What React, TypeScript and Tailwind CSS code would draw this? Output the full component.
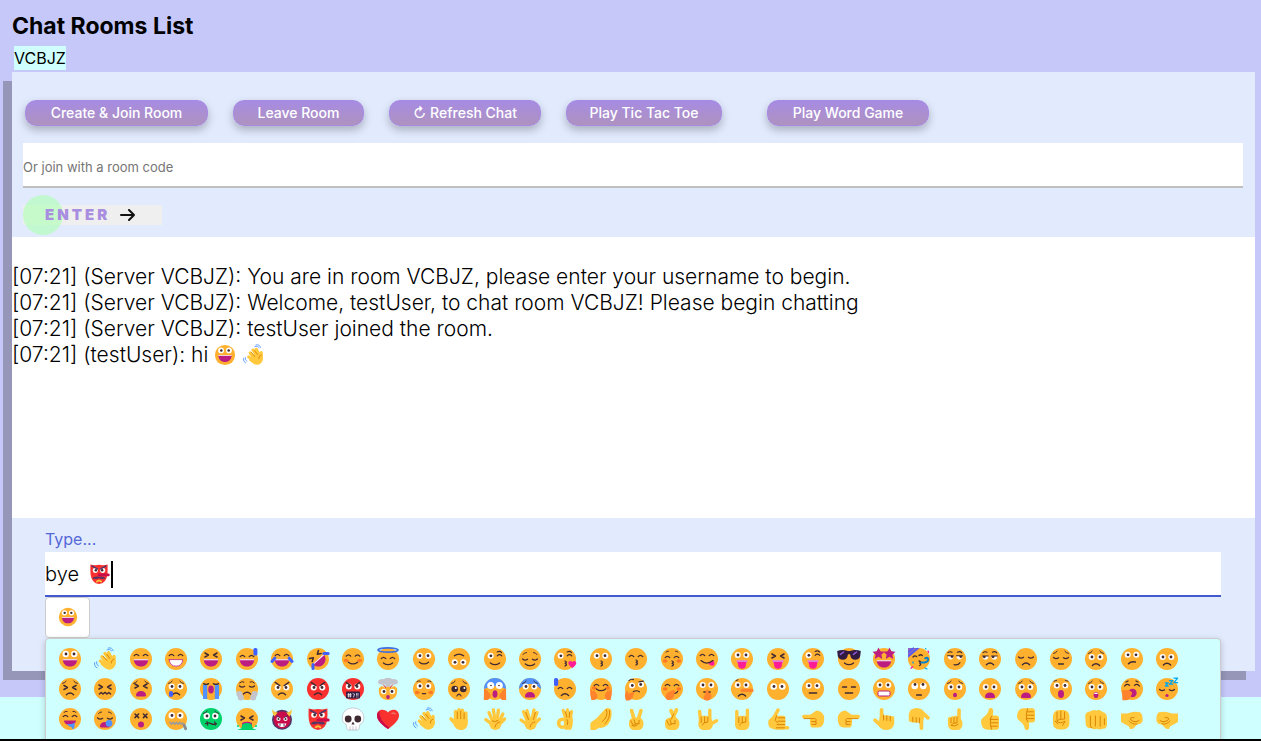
import React, { useState, type ReactNode } from "react";

const INK = "#402a32";
const FACE = "#ffb02e";
const MOUTH = "#bb1d80";
const PINK = "#ff1d96";
const BLUE = "#3f5fff";
const SKY = "#5092ff";
const ORANGE = "#ff822d";
const SKIN = "#ffc83d";
const CREASE = "#d67d00";

/* ---------- drawing primitives, all on a 24 x 24 canvas ---------- */

function Stroke({ d, c = INK, w = 1.3 }: { d: string; c?: string; w?: number }) {
  return <path d={d} fill="none" stroke={c} strokeWidth={w} strokeLinecap="round" strokeLinejoin="round" />;
}

function Disc({ c = FACE }: { c?: string }) {
  return <circle cx="12" cy="12" r="11" fill={c} />;
}

function Eye({ x, y, r = 3, px = 0, py = 0, p = 1.4 }: { x: number; y: number; r?: number; px?: number; py?: number; p?: number }) {
  return (
    <>
      <circle cx={x} cy={y} r={r} fill="#fff" />
      <circle cx={x + px} cy={y + py} r={p} fill={INK} />
    </>
  );
}

function Open({ y = 8.7, r = 3, px = 0.3, py = 0, p = 1.4 }: { y?: number; r?: number; px?: number; py?: number; p?: number }) {
  return (
    <>
      <Eye x={7.7} y={y} r={r} px={px} py={py} p={p} />
      <Eye x={16.3} y={y} r={r} px={-px} py={py} p={p} />
    </>
  );
}

const Arcs = ({ y = 8 }: { y?: number }) => (
  <g transform={`translate(0 ${y})`}>
    <Stroke d="M5.2 .6q2.2-2.6 4.6 0M14.2 .6q2.2-2.6 4.6 0" />
  </g>
);
const Closed = ({ y = 11 }: { y?: number }) => (
  <g transform={`translate(0 ${y})`}>
    <Stroke d="M4.6 0q2.4 2.2 5 .3M19.4 0q-2.4 2.2-5 .3" />
  </g>
);
const Squint = ({ y = 8 }: { y?: number }) => (
  <g transform={`translate(0 ${y})`}>
    <Stroke d="M6-2l3.4 2L6 2M18-2l-3.4 2L18 2" w={1.5} />
  </g>
);
const Wink = ({ y = 8 }: { y?: number }) => (
  <>
    <Eye x={7.6} y={y + 0.8} px={0.3} />
    <g transform={`translate(0 ${y})`}>
      <Stroke d="M14.2 .8q2.2-2.4 4.6 0M14.2-3q2.6-1.6 4.4 .6" w={1.1} />
    </g>
  </>
);
const SadBrows = () => <Stroke d="M4.6 6.4q2.4-.4 3.6-2.2M19.4 6.4q-2.4-.4-3.6-2.2" w={1} />;
const AngryBrows = () => <Stroke d="M5.2 5.4l4.6 3.2M18.8 5.4l-4.6 3.2" w={1.4} />;
const Blush = ({ y = 13.5 }: { y?: number }) => (
  <g fill="#ff6723" opacity=".75">
    <ellipse cx="5.2" cy={y} rx="2.4" ry="1.8" />
    <ellipse cx="18.8" cy={y} rx="2.4" ry="1.8" />
  </g>
);
const Laugh = () => (
  <>
    <path d="M4.8 12.2h14.4c0 4.4-3 7.4-7.2 7.4s-7.2-3-7.2-7.4z" fill={MOUTH} />
    <path d="M4.8 12.2h14.4l-.2 1H5z" fill="#fff" />
  </>
);
const Smile = ({ y = 15.2 }: { y?: number }) => (
  <g transform={`translate(0 ${y})`}>
    <Stroke d="M7.4 0q4.6 3.4 9.2 0" />
  </g>
);
const Frown = ({ y = 17.8 }: { y?: number }) => (
  <g transform={`translate(0 ${y})`}>
    <Stroke d="M8.4 0q3.6-3.4 7.2 0" w={1.4} />
  </g>
);
const Kiss = ({ y = 13 }: { y?: number }) => (
  <g transform={`translate(0 ${y})`}>
    <Stroke d="M12 0q2.6.9.2 2.4q2.6 1.2-.2 2.6" />
  </g>
);
const Tongue = () => (
  <>
    <path d="M6.2 13.200h11.600l-1 2.600H7.200z" fill="#e07be0" />
    <path d="M7.600 15h8.800l-.8 4.400q-.6 2.400-3.600 2.400t-3.600-2.400z" fill={PINK} />
  </>
);
const Flat = ({ y = 16 }: { y?: number }) => (
  <g transform={`translate(0 ${y})`}>
    <Stroke d="M8.400 0h7.200" w={1.500} />
  </g>
);
const Gape = ({ y = 17, rx = 2.4, ry = 2.6 }: { y?: number; rx?: number; ry?: number }) => (
  <ellipse cx="12" cy={y} rx={rx} ry={ry} fill={MOUTH} />
);
const Moan = ({ y = 14.500 }: { y?: number }) => (
  <g transform={`translate(0 ${y})`}>
    <path d="M7 4.600C7 1.600 9 0 12 0s5 1.600 5 4.600q0 .8-1 .8H8q-1 0-1-.8z" fill={MOUTH} />
  </g>
);
const HandBlob = ({ d }: { d: string }) => <path d={d} fill={ORANGE} />;

/* ---------- hands ---------- */

const Finger = ({ d, w = 3.4 }: { d: string; w?: number }) => <Stroke d={d} c={SKIN} w={w} />;
const Crease = ({ d }: { d: string }) => <Stroke d={d} c={CREASE} w={0.9} />;

const Wave = () => (
  <>
    <Finger d="M9 9.800l6 7M12 6.600l6 8M15.600 5.800l4 8M7.400 14l6.400 5.400M21 9.400v7" w={3.400} />
    <path d="M9.600 14l8-5.400 5 4.400q1 6-3.200 8.800-3.400 2-6.800-.2l-5-4z" fill={SKIN} />
    <Crease d="M10.400 9.400l3.400 4M13.800 7.400l3 4M21 12q-3 1-2.800 4" />
    <Stroke d="M14 2.800q3-1.600 4.600 1M15.200 1q4.200-1 5 2.800M3.600 14.800q-.8 3 1.800 4.200M1.600 15.600q-.6 4 2.400 5.200" c={SKY} w={0.9} />
  </>
);
const PalmUp = () => (
  <>
    <Finger d="M8.600 4.600v10M12 2.900v12M15.400 3.400V15M18.800 6V16M4 12l5 5" w={3.600} />
    <path d="M7 11h13.600v5.500c0 4-2.600 6.500-6.400 6.500-3.400 0-5.400-1.400-7.400-4.500z" fill={SKIN} />
    <Crease d="M10.300 5v6.600M13.700 4.200v7.400M17.100 6v5.800" />
  </>
);
const Spread = () => (
  <>
    <Finger d="M6 5.600l3.800 9M10.400 3l1.800 11M15.400 3.200L14 14M19.800 7l-4.200 9M2.800 12.600l7 5M21.600 12l-6 6" w={3.300} />
    <circle cx="12.400" cy="17" r="6" fill={SKIN} />
    <Crease d="M9.400 14q3 1.800 5.600-.6M16.800 15q-4 .4-4.800 5" />
  </>
);
const Vulcan = () => (
  <>
    <Finger d="M5.600 4.800l4 10M9 3.600l2.800 10M16 3l-2.400 11M19 5.600l-3.600 10M3 13l7 5M21.400 12l-6 6" w={3.300} />
    <circle cx="12.600" cy="17" r="6" fill={SKIN} />
    <Crease d="M7.800 5.400l2.600 7.200M17.400 5.400l-2 7M16.800 15q-4 .4-4.800 5" />
  </>
);
const Okay = () => (
  <>
    <Finger d="M10.200 3.400l3.200 10M14.400 2.800l.8 11M18.600 4.600l-2 9" w={3.200} />
    <path d="M12 9.600h7.400q1.400 7.400-1.400 13.200h-6q-2-2-.4-13z" fill={SKIN} />
    <circle cx="9.600" cy="16.200" r="4" fill="none" stroke={SKIN} strokeWidth="3.600" />
    <Crease d="M12.300 4.600l1.600 5.600M16.600 4.800l-.4 5.600M14 12.600q1.600 2 .4 5" />
  </>
);
const Pinch = () => (
  <>
    <path d="M1.400 23v-7q3-3 6-4.600L15.600 2.400q4-3 6.600.4 1.600 8.600-3.400 15-3.600 3.600-8.600 3L6.400 23z" fill={SKIN} />
    <Crease d="M17.400 2.600q2.600 6.800-4.200 12M20.400 3.400q1.400 7.400-4.400 13.400" />
  </>
);
const Fist = ({ children }: { children?: ReactNode }) => (
  <>
    <rect x="5" y="10.400" width="14.400" height="12.600" rx="5.200" fill={SKIN} />
    {children}
  </>
);
const Victory = () => (
  <>
    <Finger d="M7.600 3.600l2.800 10M17 3.600l-3 10" w={3.600} />
    <Fist>
      <Crease d="M6.800 13.600l2 4M10 12.600l1.400 4.600M15 13.400v3.600q-4-1.400-5.400 1.400M8 18.600q3 1.800 5.400-.6" />
    </Fist>
  </>
);
const Crossed = () => (
  <>
    <Finger d="M11 3.800l4.600 10M16.400 3l-4.600 10" w={3.800} />
    <Fist>
      <Crease d="M13.600 7l-2.200 5M6.800 13.600l2 4M10 12.600l1.400 4.600M15 13.400v3.600q-4-1.400-5.400 1.400" />
    </Fist>
  </>
);
const Horns = () => (
  <>
    <Finger d="M6.800 4.400v10M17.400 3.200v11" w={3.400} />
    <Fist>
      <Finger d="M10.600 10v4M14 10v4" w={3.200} />
      <Crease d="M8.800 10v5.600M12.300 9.600v6M15.800 10v5q-4.800 0-6.400 3" />
    </Fist>
  </>
);
const LoveYou = () => (
  <>
    <Finger d="M4.600 4.400l1 10M14.800 3.200v11M14 18l7.600-4.200" w={3.400} />
    <g transform="translate(-1.600 0)">
      <Fist>
        <Finger d="M9.600 10v4M12.800 10v4" w={3.200} />
        <Crease d="M7.800 10v5.600M11.200 9.600v6M14.400 10v5q-4.400 0-5.600 3" />
      </Fist>
    </g>
  </>
);
const CallMe = () => (
  <>
    <Finger d="M12 3.200L6.600 13M11 20.800h10.600" w={3.600} />
    <path d="M2.400 13.600q4-5.600 9-4.800h6q2 0 2 2v9.600q0 2-2 2H9Q.8 22 2.400 13.600z" fill={SKIN} />
    <Crease d="M10.600 8.600l-1.400 4.800 2.600 2.600M12 10.800h6.600M12 14.200h7M11 17.600h7.600M10.400 20.800h8" />
  </>
);
const PointLeft = () => (
  <>
    <Finger d="M2.800 9.600H14" w={3.600} />
    <path d="M9 8l6.400-4.400q7.800.8 7.800 8.400t-5.400 8.600h-6.800q-2.400-1.400-2-6.600z" fill={SKIN} />
    <Crease d="M3 11.600h10.400M10.600 14.600h4.200M11 17.400h3.800M14.400 11.600q1.800 1.200.2 3 1.600 1.400 0 3" />
  </>
);
const PointUp = () => (
  <>
    <Finger d="M9.600 2.900V14M3 13.200l6 5.400" w={3.700} />
    <path d="M8 9q8-1.800 14.200.8v7q-1.200 6.200-7.800 6.200T6.400 17z" fill={SKIN} />
    <Crease d="M11.600 8v5M14.800 8.800v4.600M18.200 9.400v4.400" />
  </>
);
const IndexUp = () => (
  <>
    <Finger d="M16 3v12" w={3.600} />
    <Fist>
      <Finger d="M6.400 11.400v5M9.400 10.400v6M12.400 10v6" w={3} />
      <Crease d="M8 11v4.800M11 10.400v5.400M14 9.800v6q-4.600-.4-6 2.600 4 1.600 7-1" />
    </Fist>
  </>
);
const ThumbUp = () => (
  <>
    <path d="M3 14.600q0-3 3-4.800 4.200-3 4.600-7 .6-2.400 2.800-1.800 2.800.8 1.400 7.400h4q2.200.4 2.200 2.600v9q0 2.600-2.600 2.800h-9Q3.400 22.600 3 14.600z" fill={SKIN} />
    <Crease d="M13.800 9.200l-1.600 3M13.400 12.400h6.400M13.200 15.800h6.600M13.200 19.200h6M12.600 11.600q-1 5 .8 10.600" />
  </>
);
const RaisedFist = () => (
  <>
    <rect x="4" y="3" width="16.400" height="19.400" rx="6" fill={SKIN} />
    <Crease d="M8 5v7.600M11.800 4.200v7.600M15.600 5v7q-5.600-.4-8 2 3 3.200 8 .6M16 14.400l-2.400 4M6 14l3 3" />
  </>
);
const Punch = () => (
  <>
    <path d="M1.200 9Q1.600 5 6 4.600 9 2 12.400 3.400q4-1 6 1.600 4 .6 4.600 5v8q-.6 4-4 3.600-3 1.600-6 .2-3 1.400-6-.8-4 .8-5.200-3z" fill={SKIN} />
    <Crease d="M6.400 9v9.600q0 2 1.400 2.200M11.400 9v10M16.200 9.200v10M20.400 11.600v6" />
  </>
);
const SideFist = () => (
  <>
    <path d="M23 6.600h-6Q10 3.600 4 5.200 1 7.200 1.400 14q1.400 3.600 5.600 3.600l3.600 4q3.800 1.600 4.400-2.200l8-4.400z" fill={SKIN} />
    <Crease d="M5 13.600q4 2.600 8-.6 2.400-2.800-3-2.400M7 17q5 .8 8-3" />
  </>
);

/* ---------- emoji catalogue ---------- */

const heart = "M12 22C3 15.600 1 11.800 1 8.200 1 2.400 8.600.6 12 5.600 15.400.6 23 2.400 23 8.200c0 3.600-2 7.400-11 13.800z";
const star = "M0-5l1.500 3.200 3.500.4-2.600 2.400.7 3.500L0 2.800l-3.100 1.700.7-3.500L-5-1.400l3.500-.4z";

const EMOJI: Record<string, ReactNode> = {
  "grinning face": (<><Disc /><Open y={7} r={3.200} /><Laugh /></>),
  "waving hand": <Wave />,
  "smiling eyes": (<><Disc /><Arcs /><Laugh /></>),
  "beaming face": (<><Disc /><Arcs /><path d="M5 12.400h14q-.4 7-7 7t-7-7z" fill="#fff" /><Stroke d="M5.200 12.600h13.600q-.6 6.600-6.800 6.600t-6.800-6.600z" c={MOUTH} w={0.8} /></>),
  "squinting face": (<><Disc /><Squint /><Laugh /></>),
  "sweat smile": (<><Disc /><Arcs y={9} /><Laugh /><rect x="18.400" y="1" width="4" height="7.600" rx="1.600" fill={BLUE} /></>),
  "tears of joy": (<><Disc /><Arcs /><Laugh /><Stroke d="M4.800 11.200l-2.800 3.200M19.200 11.200l2.800 3.200" c={BLUE} w={3} /></>),
  "rolling laugh": (<><g transform="rotate(-42 12 12)"><Disc /><Squint /><Laugh /></g><Stroke d="M17.800 6.600h4.400M7 17.400v4.200" c={BLUE} w={3} /></>),
  "blushing smile": (<><Disc /><Blush /><Arcs y={8.500} /><Smile /></>),
  halo: (<><Disc /><ellipse cx="12" cy="3" rx="10" ry="2.100" fill="none" stroke="#3f6fe0" strokeWidth="1.700" /><Arcs y={11} /><Smile y={16} /></>),
  "slight smile": (<><Disc /><Open /><Smile /></>),
  "upside down": (<g transform="rotate(180 12 12)"><Disc /><Open /><Smile /></g>),
  "winking face": (<><Disc /><Wink /><Smile y={16} /></>),
  "relieved face": (<><Disc /><Closed y={12} /><Stroke d="M5 7.500q1-2 3.600-2M19 7.500q-1-2-3.600-2" w={0.9} /><Smile y={17} /></>),
  "blowing a kiss": (<><Disc /><Wink /><Kiss y={14} /><path d={heart} transform="translate(15 13) scale(.36)" fill={PINK} /></>),
  "kissing face": (<><Disc /><Open /><Kiss y={14} /></>),
  "kissing smile": (<><Disc /><Arcs y={9} /><Kiss /></>),
  "kissing blush": (<><Disc /><Blush y={14} /><Arcs y={10} /><Stroke d="M6 5q1.200-1 2.400-.8M18 5q-1.200-1-2.400-.8" w={1} /><Kiss y={14} /></>),
  savoring: (<><Disc /><Arcs /><path d="M13 15.800l5.400-2.200q2.400 4.600-.8 5.200-2.800.4-4.600-3z" fill={PINK} /><Stroke d="M6 13.600q5.400 5 12 0" /></>),
  tongue: (<><Disc /><Open y={8} /><Tongue /></>),
  "squinting tongue": (<><Disc /><Squint y={9} /><Tongue /></>),
  "winking tongue": (<><Disc /><Wink y={7.500} /><Tongue /></>),
  sunglasses: (<><Disc /><path d="M.2 4Q5.400 1.800 11 4h2q5.600-2.200 10.800 0l-.6 5q-1 3.800-5 3.800-4.400 0-5.200-5.600h-2q-.8 5.600-5.200 5.600-4 0-5-3.800z" fill="#321b41" /><Stroke d="M3.400 7.400l3.200-2.400M16.400 7.400l3.200-2.400" c="#8c5ad8" w={1.500} /><Smile y={16} /></>),
  "star struck": (<><Disc /><path d={star} transform="translate(6.500 6.500) scale(1.200)" fill={MOUTH} /><path d={star} transform="translate(17.500 6.500) scale(1.200)" fill={MOUTH} /><g transform="translate(0 1)"><Laugh /></g></>),
  partying: (<><Disc /><path d="M1 1h12L1 11z" fill="#8d65c5" /><Stroke d="M1.800 5l4.600-4M1.800 8.800l8.600-7.400" c={BLUE} w={1.200} /><Stroke d="M6 10q1.800-2 3.600-.4M12 8.600q1.800-1.600 3.400 0" /><Stroke d="M12 14q2.600.6.6 2 2 1 0 2.600" /><Stroke d="M14.400 15.600q7 0 6.800-3.200-.6-2.800-3-1" c="#0084ce" w={2} /><Stroke d="M4 21.400l1.600-1.600M21 4l.6 1.600" c={PINK} /><Stroke d="M18 21l2 1M18.600 1.600l.2.200M6 15v1" c="#00a6ed" /></>),
  smirking: (<><Disc /><Eye x={7.700} y={9.600} r={2.800} px={1.300} /><Eye x={16.500} y={9.600} r={2.800} px={1.300} /><path d="M4 5h16.600v4H4z" fill={FACE} /><Stroke d="M4.600 8.800h5.600M13.600 8.800h5.800M5 5.600q2-1.600 4-.4M14.400 5.200q2.600-1.400 4.400.6M11 17.600q4 1.200 6-2" w={1.100} /></>),
  unamused: (<><Disc /><Eye x={7.500} y={9.800} r={2.800} px={-1.200} /><Eye x={16.300} y={9.800} r={2.800} px={-1.200} /><path d="M4 5h16v4H4z" fill={FACE} /><Stroke d="M4.600 9h5.600M13.600 9h5.600M5 5.600q2-1.600 4-.4M14.400 5.200q2.600-1.400 4.400.6" w={1.100} /><Frown /></>),
  disappointed: (<><Disc /><Closed y={10} /><Frown /></>),
  pensive: (<><Disc /><Closed y={10.500} /><SadBrows /><g transform="translate(3.600 0) scale(.7 1)"><Flat y={17} /></g></>),
  worried: (<><Disc /><Open y={10} /><SadBrows /><Frown y={18.500} /></>),
  confused: (<><Disc /><Open y={7.800} /><Stroke d="M8.400 16.800q2.600-2.800 7-1.800" /></>),
  "slight frown": (<><Disc /><Open y={10} /><Frown y={18} /></>),

  persevering: (<><Disc /><SadBrows /><Squint y={10.500} /><Frown /></>),
  confounded: (<><Disc /><Squint y={10} /><Stroke d="M6.400 17l1.800-1.600L10 17l2-1.600 2 1.600 1.800-1.600L17.600 17" w={1.400} /></>),
  tired: (<><Disc /><SadBrows /><Squint y={9} /><Moan y={14} /></>),
  crying: (<><Disc /><Open y={9.500} /><SadBrows /><Frown /><rect x="5" y="14" width="4" height="6" rx="2" fill={BLUE} /></>),
  sobbing: (<><Disc /><Stroke d="M4.600 6.600q2.600 1.600 5 0M19.400 6.600q-2.600 1.600-5 0" /><path d="M4 8h4.200v14H4zM15.800 8H20v14h-4.200z" fill={SKY} /><Gape y={12.500} rx={2.800} ry={4} /></>),
  "steam from nose": (<><Disc /><Stroke d="M4.600 6q2-2.400 4.400-1M19.400 6q-2-2.400-4.400-1" w={1} /><Closed y={9} /><Frown y={17} /><g fill="#c4c4cc"><circle cx="4.400" cy="17" r="3" /><circle cx="5.800" cy="20.400" r="3" /><circle cx="19.600" cy="17" r="3" /><circle cx="18.200" cy="20.400" r="3" /></g></>),
  angry: (<><Disc /><Open y={10.500} /><AngryBrows /><Frown /></>),
  enraged: (<><Disc c="#f8312f" /><Open y={10.500} /><AngryBrows /><Frown /></>),
  cursing: (<><Disc c="#f8312f" /><Open y={9.500} /><AngryBrows /><rect x="5" y="14.600" width="14" height="7" rx="1" fill="#321b41" /><Stroke d="M7.600 16.400v3.600M9.400 16.400v3.600M6.800 17.400h3.400M6.800 19h3.400M12 16.600l1.600.6-1 2.800M15.600 16.400v2M17 16.400v2M15.600 20h.1M17 20h.1" c="#fff" w={0.7} /></>),
  "exploding head": (<><path d="M3 11l3-2 2.600 1.600L12 8.400l3.400 2.200L18 9l3 2q1.400 11.400-9 12Q1.600 22.400 3 11z" fill={FACE} /><path d="M2 5Q2 1.600 8 2q4-2.400 8 0 6-.4 6 3 0 2.600-5 2.600h-2.600l1 3.400-3.400-1.600L8.600 11l1-3.400H7Q2 7.600 2 5z" fill="#c4c4cc" /><Stroke d="M7.600 8l2 2.600M16.400 8l-2 2.600" c="#f8312f" w={1} /><Open y={14.500} r={2.700} /><Gape y={20} rx={1.800} ry={2} /></>),
  flushed: (<><Disc /><Blush y={15.500} /><Open y={9} /><Stroke d="M5 4.600q1.600-1.200 3.200-.6M19 4.600q-1.600-1.200-3.200-.6" w={0.9} /><Stroke d="M10.400 16.600h3.200" /></>),
  pleading: (<><Disc /><SadBrows /><circle cx="7.700" cy="12" r="3.300" fill={INK} /><circle cx="16.300" cy="12" r="3.300" fill={INK} /><g fill="#fff"><circle cx="8.800" cy="11" r="1" /><circle cx="17.400" cy="11" r="1" /></g><g transform="translate(4.800 0) scale(.6 1)"><Frown y={19} /></g></>),
  screaming: (<><Disc /><path d="M1 12a11 11 0 0 1 22 0q-6-3-11-3t-11 3z" fill={SKY} /><Open y={8.500} r={3.500} p={0.8} /><Gape y={17} rx={2.500} ry={3.800} /><HandBlob d="M1 12q3 0 4.600 3.600 3 1.600 1.800 5L5 23H.8zM23 12q-3 0-4.600 3.600-3 1.600-1.800 5L19 23h4.200z" /></>),
  "anxious with sweat": (<><Disc /><path d="M1 12a11 11 0 0 1 22 0q-6-5-11-5t-11 5z" fill={SKY} /><Open y={9.500} /><SadBrows /><Moan y={15} /></>),
  "downcast with sweat": (<><Disc /><Arcs y={11} /><Frown y={18.500} /><rect x="1" y="1" width="4.200" height="8" rx="1.800" fill={BLUE} /></>),
  hugging: (<><Disc /><Blush y={11} /><Arcs y={8} /><Smile y={12} /><HandBlob d="M1.400 11.600l2.800 3 .8-1.400 3 4q1 3.800-2 5.800H2.400Q.4 17 1.400 11.600zM22.600 11.600l-2.800 3-.8-1.400-3 4q-1 3.800 2 5.800h3.600q2-5.400 1-11.400z" /></>),
  thinking: (<><Disc /><Eye x={8} y={8.500} px={0.3} /><Eye x={17} y={7.500} px={-0.3} /><Stroke d="M5 3.600q2-2 4.400-1M15 4.800l4.400-.6M9.400 14.600q3-1.800 6 .2" w={1.200} /><HandBlob d="M2 14q2-.6 2.400 2.600l5-1.600q2.400.2.400 2-1 6-4.800 6.400H2Q-.2 18.600 2 14z" /></>),
  "hand over mouth": (<><Disc /><Blush y={12} /><Arcs y={8} /><Stroke d="M14.600 16.400q2.400-.4 3-2" /><HandBlob d="M13.400 13q2.600.4 1 3.800-.2 5-4.400 6.200-4 .8-4.600-3.600Q6 15 13.400 13z" /></>),
  shushing: (<><Disc /><Open y={8} /><Stroke d="M8.800 15h6.400" /><HandBlob d="M11.600 12.600q2.200-.4 2 3 3.800 1.400 2.400 5.400-1 3-4.600 2.600-3.600-.8-2.600-4.400.8-1.200 1.600-2.400-.2-3.400 1.200-4.200z" /></>),
  lying: (<><Disc /><Open y={8} /><Stroke d="M6 3.600l2-.8" w={1} /><Stroke d="M12.400 13.400h9.600" c={ORANGE} w={3.200} /><Frown y={19} /></>),
  "no mouth": (<><Disc /><Open y={9.500} r={3.300} /></>),
  neutral: (<><Disc /><Open /><Flat y={16} /></>),
  expressionless: (<><Disc /><Stroke d="M5.600 10h4M14.400 10h4" w={1.400} /><Flat y={16} /></>),
  grimacing: (<><Disc /><Open y={8} /><rect x="6" y="14" width="12" height="5" rx="1.600" fill="#fff" stroke={MOUTH} strokeWidth="1" /></>),
  "rolling eyes": (<><Disc /><Open y={9} r={3.300} py={-1.500} /><Stroke d="M9.600 18h4.800" /></>),
  hushed: (<><Disc /><Open y={10} /><SadBrows /><Gape y={18} rx={2} ry={2.200} /></>),
  "frowning open": (<><Disc /><Open y={10} /><Moan y={15.500} /></>),
  anguished: (<><Disc /><Open y={10} /><SadBrows /><Moan y={15.500} /></>),
  "open mouth": (<><Disc /><Open y={8.500} /><Stroke d="M5 4.200l2.600-.8M19 4.200l-2.600-.8" w={0.9} /><Gape y={17} rx={3} ry={4} /></>),
  astonished: (<><Disc /><Open y={10} /><SadBrows /><Gape y={18} rx={2.400} ry={3} /><path d="M10 17q.4-1.600 2-1.600t2 1.600z" fill="#fff" /></>),
  yawning: (<><Disc /><Stroke d="M4.600 9q2.400-3 5-.6M19.400 9q-2.400-3-5-.6M6 5l2-1M18 5l-2-1" w={1.200} /><circle cx="12.500" cy="16" r="4.200" fill={MOUTH} /><HandBlob d="M2 13.600q5-1.400 9 .6 2.400 2 .2 4-1 4.600-4.600 5H2.400z" /></>),
  sleeping: (<><Disc /><Closed y={12.500} /><Gape y={18.500} rx={1.600} ry={1.600} /><Stroke d="M10.400 6h2.800l-2.800 3h2.800M14.600 3.600h3.200l-3.200 3.600h3.200M19 1.200h3.600l-3.600 4.400h3.600" c="#00a6ed" w={1.300} /></>),

  drooling: (<><Disc /><Arcs y={9} /><Stroke d="M6 5.400q1.200-1.400 3-1M18 5.400q-1.200-1.400-3-1" w={1} /><path d="M6 13.600h12q-.4 4.400-6 4.400t-6-4.400z" fill={MOUTH} /><path d="M9 17h5l2.400-1.400q.6 5-1 6.400-1.600.6-1.800-2-2.400.6-4.600-3z" fill={SKY} /></>),
  sleepy: (<><Disc /><Closed y={11} /><Stroke d="M5.400 6.600q1.200-1.600 3.200-1.600M18.600 6.600q-1.200-1.600-3.200-1.600" w={0.9} /><Moan y={15} /><circle cx="16" cy="16.400" r="3.300" fill={SKY} /></>),
  dizzy: (<><Disc /><Stroke d="M6 7l3.600 3.600M9.600 7L6 10.600M14.400 7l3.600 3.600M18 7l-3.600 3.600" w={1.500} /><Gape y={17.500} rx={3} ry={3} /></>),
  "zipper mouth": (<><Disc /><Open y={8.500} r={3.200} /><Stroke d="M6 15.400l1.600 1.800 1.600-1.800 1.600 1.800 1.600-1.800 1.600 1.800 1.600-1.800 1.600 1.800 1.600-1.200" c="#9b9b9b" w={1.600} /><Stroke d="M20 18l1.600 3.600" c="#8c8c8c" w={3} /></>),
  nauseated: (<><Disc c="#00d26a" /><Open y={9} r={3.200} /><SadBrows /><Stroke d="M6.600 16.600q2.600-1.600 5.400 0 2.800 1.600 5.400 0M8 14.600l.6 3.400M15.800 15l.4 3" /></>),
  vomiting: (<><Disc /><Squint y={11} /><path d="M7 16q5-2.400 10 0v4H7z" fill={MOUTH} /><path d="M7.600 17q4.400-2 8.800 0l1.400 4.400 4 1.600H2.200l4-1.600z" fill="#00d26a" /><g fill="#00d26a"><circle cx="3" cy="19" r="1" /><circle cx="21" cy="19" r="1" /></g></>),
  imp: (<><circle cx="12" cy="12.800" r="10" fill="#533566" /><circle cx="12" cy="13" r="8.400" fill="#ca0b4a" /><path d="M2.600 2q1 3.400 5.200 3.600L4.600 9.400Q1.400 6 2.600 2zM21.400 2q-1 3.400-5.200 3.600l3.200 3.800q3.200-3.400 2-7.400z" fill="#f9c23c" /><Eye x={8.500} y={12} r={2.100} p={1} /><Eye x={15.500} y={12} r={2.100} p={1} /><path d="M7.600 16.400h8.800q-1 3.600-4.400 3.600t-4.400-3.600z" fill="#fff" /><Stroke d="M6.400 8.800l3.200 1.600M17.600 8.800l-3.200 1.600M10 17v2M14 17v2" c="#533566" w={1} /></>),
  goblin: (<><path d="M2.600 1.600q4 1.400 9.400.4 5.400 1 9.400-.4.2 7-.2 11-1.200 9.800-9.200 10.400-8-.6-9.200-10.400-.4-4-.2-11z" fill="#f8312f" /><Eye x={8} y={8} r={2.800} px={0.600} /><Eye x={16} y={8} r={2.800} px={-0.600} /><Stroke d="M4.600 3.400l5.600 3M19.400 3.400l-5.600 3" c="#533566" w={1.700} /><path d="M4.400 17q3-3.400 7.600-2 4.600-1.400 7.600 2-4.600 1-7.600-.4-3 1.400-7.600.4z" fill="#533566" /><Stroke d="M12 13h10.200" c="#ca0b4a" w={3} /><Stroke d="M9.600 20.400q2.400-2.400 4.800 0" c="#f9c23c" w={1.800} /></>),
  skull: (<><path d="M12 1C5 1 1.200 5.600 1.200 11c0 3.600 1.600 5.600 4 6.400L6 22q.4 1 1.600 1h8.800q1.200 0 1.600-1l.8-4.600c2.400-.8 4-2.800 4-6.400C22.800 5.600 19 1 12 1z" fill="#fff" stroke="#b4acbc" strokeWidth=".6" /><circle cx="7.200" cy="12" r="3.400" fill={INK} /><circle cx="16.800" cy="12" r="3.400" fill={INK} /><path d="M12 14.600l1.600 3h-3.200z" fill={INK} /><Stroke d="M9 19.600V23M12 19.600V23M15 19.600V23" c="#b4acbc" w={0.700} /></>),
  heart: (<><path d={heart} fill="#f8312f" /><path d="M3.400 3.800Q1 5.600 1 8.400c0 3.600 2 7.400 11 13.600l1.600-1.200Q2.600 13.400 3.400 3.800z" fill="#ca0b4a" /><Stroke d="M16 6.400q1.600-1 3 .4" c="#f37366" w={1.600} /></>),
  "waving hand again": <Wave />,
  "raised back of hand": <PalmUp />,
  "hand with fingers splayed": <Spread />,
  "vulcan salute": <Vulcan />,
  "ok hand": <Okay />,
  "pinched fingers": <Pinch />,
  "victory hand": <Victory />,
  "crossed fingers": <Crossed />,
  "love-you gesture": <LoveYou />,
  "sign of the horns": <Horns />,
  "call me hand": <CallMe />,
  "pointing left": <PointLeft />,
  "pointing right": (<g transform="matrix(-1 0 0 1 24 0)"><PointLeft /></g>),
  "pointing up": <PointUp />,
  "pointing down": (<g transform="matrix(-1 0 0 -1 24 24)"><PointUp /></g>),
  "index pointing up": <IndexUp />,
  "thumbs up": <ThumbUp />,
  "thumbs down": (<g transform="matrix(1 0 0 -1 0 24)"><ThumbUp /></g>),
  "raised fist": <RaisedFist />,
  "oncoming fist": <Punch />,
  "left-facing fist": (<g transform="matrix(-1 0 0 1 24 0)"><SideFist /></g>),
  "right-facing fist": <SideFist />,
};

function Emoji({ name, className }: { name: string; className: string }) {
  return (
    <svg viewBox="0 0 24 24" className={className} role="img" aria-label={name}>
      {EMOJI[name]}
    </svg>
  );
}

/* ---------- page ---------- */

function PillButton({ children, className = "" }: { children: ReactNode; className?: string }) {
  return (
    <button
      type="button"
      className={`h-[26px] whitespace-nowrap rounded-[11px] border border-[#a78be3] bg-linear-to-b from-[#a78be3] to-[#ae92bf] text-sm leading-[22px] font-medium text-white shadow-[0_4px_8px_rgba(0,0,0,0.25)] ${className}`}
    >
      {children}
    </button>
  );
}

const SERVER_LINES = [
  "[07:21] (Server VCBJZ): You are in room VCBJZ, please enter your username to begin.",
  "[07:21] (Server VCBJZ): Welcome, testUser, to chat room VCBJZ! Please begin chatting",
  "[07:21] (Server VCBJZ): testUser joined the room.",
];

export default function App() {
  const [text, setText] = useState("bye");

  return (
    <div className="flex h-screen flex-col overflow-hidden bg-[#cfffff] font-['Inter',sans-serif] text-black">
      <div className="bg-[#c5c8f9] pt-3 pr-1.5 pb-[26px] pl-3">
        <h1 className="text-[23px] leading-7 font-bold">Chat Rooms List</h1>
        <ul className="mt-1.5 mb-0.5 ml-0.5 flex">
          <li className="bg-[#cfffff] text-base leading-6 font-normal">VCBJZ</li>
        </ul>

        <main className="bg-[#e2eafe] shadow-[-9px_9px_0_#9596b8]">
          <section className="pt-7 pr-3 pb-0.5 pl-[11px]">
            <div className="flex gap-[25px] pl-0.5">
              <PillButton className="w-[183px]">Create &amp; Join Room</PillButton>
              <PillButton className="w-[131px]">Leave Room</PillButton>
              <PillButton className="w-[152px]">↻ Refresh Chat</PillButton>
              <PillButton className="w-[156px]">Play Tic Tac Toe</PillButton>
              <PillButton className="ml-5 w-[162px]">Play Word Game</PillButton>
            </div>
            <input
              type="text"
              aria-label="Room code"
              placeholder="Or join with a room code"
              className="mt-[17px] block h-[45px] w-full border-b-2 border-[#bfbfbf] bg-white pt-1 text-[13px] outline-none placeholder:text-[#757575]"
            />
            <button type="button" className="relative mt-[7px] flex h-10 w-[139px] items-center">
              <span className="flex h-5 w-full items-center bg-[#efefef]" />
              <span className="absolute left-0 size-10 rounded-full bg-[#b1ffb6]/65" />
              <span className="absolute left-[22px] flex items-center gap-2.5">
                <span className="text-[15px] leading-5 font-black tracking-[3px] text-[#a98de0]">ENTER</span>
                <svg viewBox="0 0 15 12" className="h-3 w-[15px]" fill="none" stroke="#111" strokeWidth="2" strokeLinecap="round" strokeLinejoin="round">
                  <path d="M1 6h13M9 1l5 5-5 5" />
                </svg>
              </span>
            </button>
          </section>

          <section className="h-[281px] overflow-hidden bg-white pt-[27px] text-[21px] leading-[26px] font-light" aria-label="Messages">
            {SERVER_LINES.map((line) => (
              <p key={line}>{line}</p>
            ))}
            <p className="flex items-center gap-1.5">
              <span>[07:21] (testUser): hi</span>
              <Emoji name="grinning face" className="size-[22px]" />
              <Emoji name="waving hand" className="size-[22px]" />
            </p>
          </section>

          <form className="relative h-[153px] pt-2 pr-[34px] pl-[33px]" onSubmit={(e) => e.preventDefault()}>
            <label htmlFor="message" className="block text-base leading-[26px] font-normal text-[#5468d6]">
              Type...
            </label>
            <div className="relative">
              <input
                id="message"
                type="text"
                value={text}
                onChange={(e) => setText(e.target.value)}
                className="block h-[45px] w-full border-b-2 border-[#4259cf] bg-white text-xl font-light outline-none"
              />
              <span className="pointer-events-none absolute top-2 left-[43px] flex h-7 items-center gap-px">
                <Emoji name="goblin" className="size-[22px]" />
                <span className="h-[27px] w-0.5 bg-black" />
              </span>
            </div>
            <button type="button" className="flex h-[41px] w-[45px] items-center justify-center rounded border border-[#ccc] bg-white pb-0.5">
              <Emoji name="grinning face" className="size-5" />
            </button>
            <div className="absolute top-[120px] right-[34px] left-[33px] grid h-[110px] auto-rows-[30px] grid-cols-[repeat(32,minmax(0,1fr))] rounded border border-[#ccc] bg-[#cfffff] pt-[5px] pr-[35px] pl-1.5 shadow-[0_2px_6px_rgba(0,0,0,0.2)]">
              {Object.keys(EMOJI).map((name) => (
                <button key={name} type="button" className="flex items-center justify-center">
                  <Emoji name={name} className="size-6" />
                </button>
              ))}
            </div>
          </form>
        </main>
      </div>
      <div className="flex-1" />
      <footer className="relative z-10 h-0.5 bg-black" />
    </div>
  );
}
